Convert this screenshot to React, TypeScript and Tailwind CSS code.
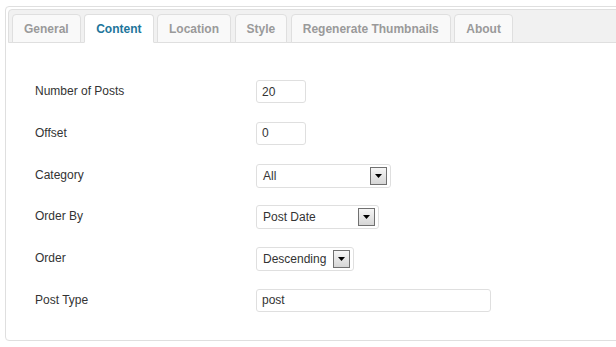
import React from 'react'

const tabs = ['General', 'Content', 'Location', 'Style', 'Regenerate Thumbnails', 'About']
const activeTab = 'Content'

function Arrow() {
  return (
    <span className="flex h-[18px] w-[17px] items-center justify-center border border-[#707070] bg-gradient-to-b from-[#f6f6f6] to-[#d6d6d6]">
      <svg width="7" height="4" viewBox="0 0 7 4">
        <path d="M0 0h7L3.5 4z" fill="#000" />
      </svg>
    </span>
  )
}

function TextInput({ value, width }: { value: string; width: string }) {
  return (
    <div className={`mt-[8px] flex h-[23px] items-center rounded-[3px] border border-[#dfdfdf] bg-white px-[5px] text-[12px] text-[#333] ${width}`}>
      {value}
    </div>
  )
}

function Select({ value, width }: { value: string; width: string }) {
  return (
    <div className={`mt-[8px] flex h-[24px] items-center rounded-[3px] border border-[#dfdfdf] bg-white pl-[6px] text-[12px] text-[#333] ${width}`}>
      <span className="flex-1 pr-[2px]">{value}</span>
      <Arrow />
      <span className="w-[3px]" />
    </div>
  )
}

function Row({ label, children }: { label: string; children: React.ReactNode }) {
  return (
    <div className="flex h-[41.8px] items-start">
      <div className="w-[221px] pt-[12px] text-[12px] leading-[14px] text-[#333]">{label}</div>
      {children}
    </div>
  )
}

export default function App() {
  return (
    <div className="h-[347px] w-[616px] overflow-hidden bg-white pl-[5px] pt-[6px] font-['Liberation_Sans',Arial,sans-serif]">
      <div className="h-[335px] w-[660px] rounded-[4px] border border-[#dfdfdf] p-[2px]">
        {/* Tab bar */}
        <div className="flex items-end gap-[3.5px] rounded-t-[4px] border border-[#dfdfdf] bg-[#f1f1f1] pl-[3px] pt-[4px]">
          {tabs.map((tab) => {
            const active = tab === activeTab
            return (
              <div
                key={tab}
                className={
                  active
                    ? 'mb-[-1px] flex h-[29px] items-center rounded-t-[4px] border border-[#dfdfdf] border-b-white bg-white px-[11px] text-[12px] font-bold text-[#21759b]'
                    : 'mb-[-1px] flex h-[29px] items-center rounded-t-[4px] border border-[#dfdfdf] bg-[#f9f9f9] px-[11px] text-[12px] font-bold text-[#9a9a9a]'
                }
              >
                {tab}
              </div>
            )
          })}
        </div>

        {/* Form */}
        <div className="pl-[27px] pt-[29px]">
          <Row label="Number of Posts">
            <TextInput value="20" width="w-[50px]" />
          </Row>
          <Row label="Offset">
            <TextInput value="0" width="w-[50px]" />
          </Row>
          <Row label="Category">
            <Select value="All" width="w-[135px]" />
          </Row>
          <Row label="Order By">
            <Select value="Post Date" width="w-[123px]" />
          </Row>
          <Row label="Order">
            <Select value="Descending" width="w-[98px]" />
          </Row>
          <Row label="Post Type">
            <TextInput value="post" width="w-[235px]" />
          </Row>
        </div>
      </div>
    </div>
  )
}
